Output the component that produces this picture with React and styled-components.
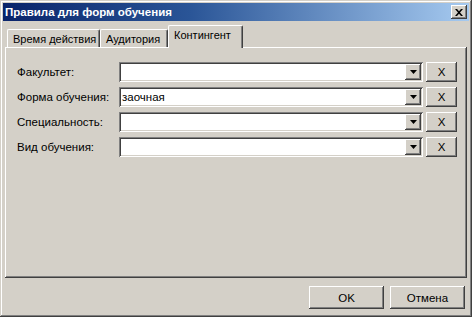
import React from "react";
import styled, { createGlobalStyle } from "styled-components";

const GlobalStyle = createGlobalStyle`
  html, body {
    margin: 0;
    padding: 0;
    background: #d4d0c8;
  }
  body {
    font-family: "Liberation Sans", Arial, sans-serif;
    font-size: 11px;
    color: #000;
  }
`;

const raised = `
  box-shadow: inset -1px -1px #404040, inset 1px 1px #ffffff,
    inset -2px -2px #808080, inset 2px 2px #d4d0c8;
`;

const sunken = `
  box-shadow: inset 1px 1px #808080, inset -1px -1px #ffffff,
    inset 2px 2px #404040, inset -2px -2px #d4d0c8;
`;

const Window = styled.div`
  width: 472px;
  height: 317px;
  box-sizing: border-box;
  padding: 3px;
  background: #d4d0c8;
  display: flex;
  flex-direction: column;
  box-shadow: inset -1px -1px #404040, inset 1px 1px #d4d0c8,
    inset -2px -2px #808080, inset 2px 2px #ffffff;
`;

const TitleBar = styled.div`
  height: 18px;
  display: flex;
  align-items: center;
  justify-content: space-between;
  padding: 0 2px 0 2px;
  background: linear-gradient(to right, #0a246a 0%, #2a5597 40%, #a6caf0 100%);
`;

const Title = styled.span`
  color: #fff;
  font-weight: bold;
  font-size: 11.5px;
`;

const CloseButton = styled.div`
  width: 16px;
  height: 14px;
  background: #d4d0c8;
  display: flex;
  align-items: center;
  justify-content: center;
  ${raised}
`;

const Body = styled.div`
  flex: 1;
  display: flex;
  flex-direction: column;
  padding: 4px 2px 0 2px;
`;

const TabStrip = styled.div`
  height: 22px;
  display: flex;
  align-items: flex-end;
  padding-left: 2px;
  position: relative;
  z-index: 1;
`;

const Tab = styled.div`
  box-sizing: border-box;
  width: ${(p) => p.$width}px;
  height: ${(p) => (p.$active ? 23 : 18)}px;
  margin-bottom: ${(p) => (p.$active ? -1 : 0)}px;
  padding: 3px 0 0 5px;
  background: #d4d0c8;
  border-top: 1px solid #fff;
  border-left: 1px solid #fff;
  border-right: 1px solid #404040;
  box-shadow: inset -1px 0 #808080;
  border-radius: 2px 2px 0 0;
  white-space: nowrap;
  font-size: 11px;
`;

const Panel = styled.div`
  height: 231px;
  box-sizing: border-box;
  padding: 15px 0 0 12px;
  display: flex;
  flex-direction: column;
  gap: 5px;
  box-shadow: inset -1px -1px #404040, inset 1px 1px #ffffff,
    inset -2px -2px #808080;
`;

const Row = styled.div`
  display: flex;
  align-items: center;
  height: 20px;
`;

const Label = styled.span`
  width: 102px;
  font-size: 11.5px;
`;

const Combo = styled.div`
  width: 304px;
  height: 20px;
  box-sizing: border-box;
  padding: 2px;
  background: #fff;
  display: flex;
  align-items: stretch;
  ${sunken}
`;

const ComboText = styled.span`
  flex: 1;
  padding-left: 1px;
  line-height: 16px;
  font-size: 11.5px;
`;

const DropButton = styled.div`
  width: 16px;
  background: #d4d0c8;
  display: flex;
  align-items: center;
  justify-content: center;
  ${raised}
`;

const ClearButton = styled.div`
  width: 31px;
  height: 20px;
  margin-left: 3px;
  background: #d4d0c8;
  display: flex;
  align-items: center;
  justify-content: center;
  font-size: 11.5px;
  ${raised}
`;

const Footer = styled.div`
  display: flex;
  justify-content: flex-end;
  gap: 6px;
  padding: 8px 2px 0 0;
`;

const Button = styled.div`
  width: 75px;
  height: 23px;
  background: #d4d0c8;
  display: flex;
  align-items: center;
  justify-content: center;
  font-size: 11.5px;
  ${raised}
`;

const Arrow = () => (
  <svg width="7" height="4" viewBox="0 0 7 4">
    <path d="M0 0h7L3.5 4z" fill="#000" />
  </svg>
);

const CloseGlyph = () => (
  <svg width="8" height="7" viewBox="0 0 8 7">
    <path d="M0 0h2l2 2.3L6 0h2L5 3.5 8 7H6L4 4.7 2 7H0l3-3.5z" fill="#000" />
  </svg>
);

const tabs = [
  { label: "Время действия", width: 93 },
  { label: "Аудитория", width: 68 },
  { label: "Контингент", width: 75, active: true },
];

const fields = [
  { label: "Факультет:", value: "" },
  { label: "Форма обучения:", value: "заочная" },
  { label: "Специальность:", value: "" },
  { label: "Вид обучения:", value: "" },
];

const App = () => {
  return (
    <>
      <GlobalStyle />
      <Window>
        <TitleBar>
          <Title>Правила для форм обучения</Title>
          <CloseButton>
            <CloseGlyph />
          </CloseButton>
        </TitleBar>
        <Body>
          <TabStrip>
            {tabs.map((t) => (
              <Tab key={t.label} $width={t.width} $active={t.active}>
                {t.label}
              </Tab>
            ))}
          </TabStrip>
          <Panel>
            {fields.map((f) => (
              <Row key={f.label}>
                <Label>{f.label}</Label>
                <Combo>
                  <ComboText>{f.value}</ComboText>
                  <DropButton>
                    <Arrow />
                  </DropButton>
                </Combo>
                <ClearButton>X</ClearButton>
              </Row>
            ))}
          </Panel>
          <Footer>
            <Button>OK</Button>
            <Button>Отмена</Button>
          </Footer>
        </Body>
      </Window>
    </>
  );
};

export default App;
